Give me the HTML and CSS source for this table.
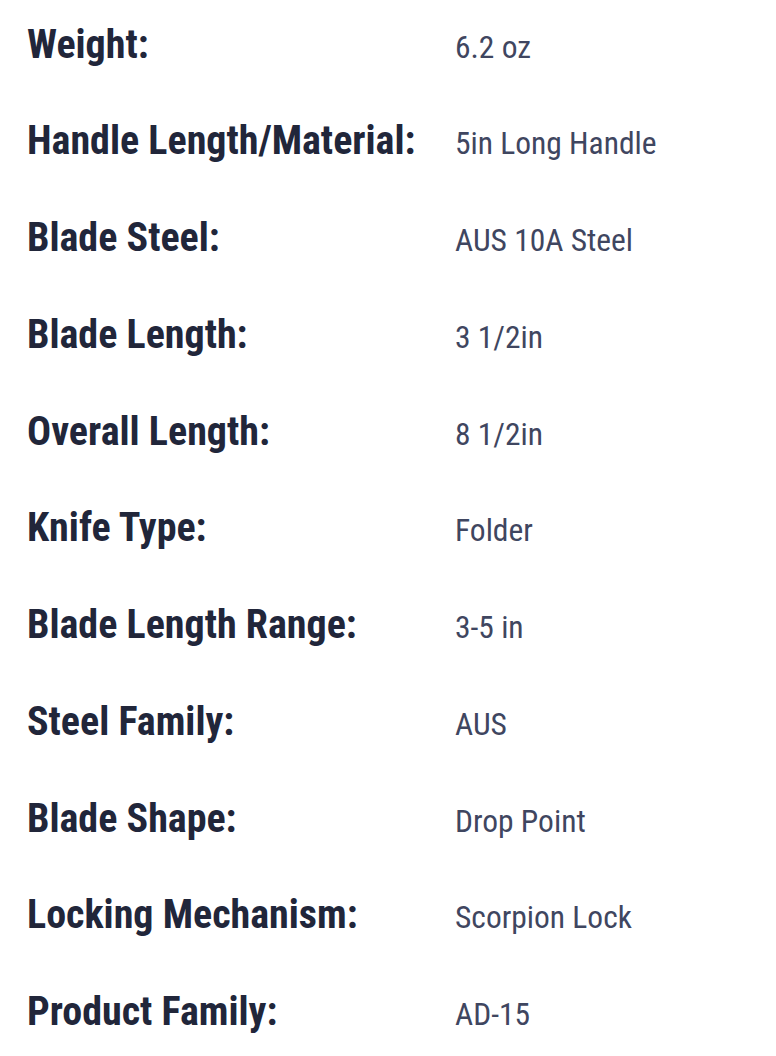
FILE: index.html
```html
<!DOCTYPE html>
<html lang="en">
<head>
<meta charset="utf-8">
<title>Specifications</title>
<link rel="stylesheet" href="styles.css">
</head>
<body>
<dl class="specs">
  <div class="row"><dt class="label">Weight:</dt><dd class="value">6.2 oz</dd></div>
  <div class="row"><dt class="label">Handle Length/Material:</dt><dd class="value">5in Long Handle</dd></div>
  <div class="row"><dt class="label">Blade Steel:</dt><dd class="value">AUS 10A Steel</dd></div>
  <div class="row"><dt class="label">Blade Length:</dt><dd class="value">3 1/2in</dd></div>
  <div class="row"><dt class="label">Overall Length:</dt><dd class="value">8 1/2in</dd></div>
  <div class="row"><dt class="label">Knife Type:</dt><dd class="value">Folder</dd></div>
  <div class="row"><dt class="label">Blade Length Range:</dt><dd class="value">3-5 in</dd></div>
  <div class="row"><dt class="label">Steel Family:</dt><dd class="value">AUS</dd></div>
  <div class="row"><dt class="label">Blade Shape:</dt><dd class="value">Drop Point</dd></div>
  <div class="row"><dt class="label">Locking Mechanism:</dt><dd class="value">Scorpion Lock</dd></div>
  <div class="row"><dt class="label">Product Family:</dt><dd class="value">AD-15</dd></div>
</dl>
</body>
</html>
```
FILE: styles.css
```css
html, body {
  margin: 0;
  padding: 0;
  background: #ffffff;
}
.specs {
  margin: 0;
  padding: 0 0 0 27px;
  font-family: "Roboto Condensed", Roboto, "Liberation Sans", sans-serif;
  font-stretch: condensed;
}
.row {
  display: flex;
  align-items: baseline;
  padding: 24.2px 0;
  height: 48.4px;
}
.row:first-child {
  padding-top: 20.6px;
}
.label {
  margin: 0;
  width: 428px;
  flex: none;
  font-size: 40px;
  line-height: 48.4px;
  font-weight: 700;
  color: #21263a;
}
.value {
  margin: 0;
  font-size: 31.5px;
  line-height: 48.4px;
  font-weight: 400;
  color: #3f4660;
}
```
